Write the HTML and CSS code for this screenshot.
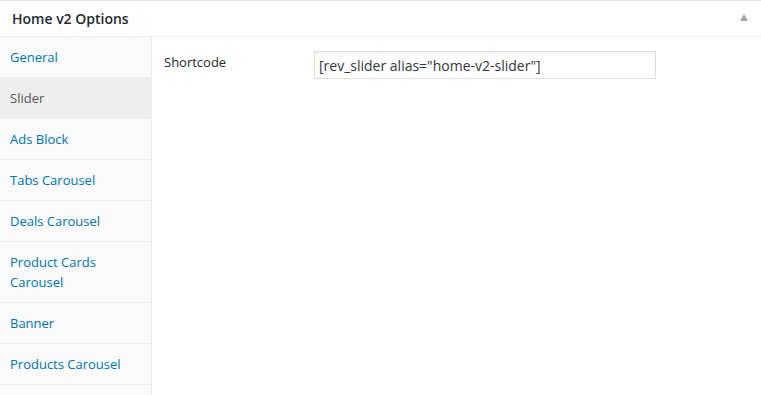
FILE: index.html
```html
<!DOCTYPE html>
<html lang="en">
  <head>
    <meta charset="UTF-8">
    <title>Home v2 Options</title>
    <link rel="stylesheet" href="styles.css">
  </head>
  <body>
    <div class="postbox">
      <div class="postbox-head">
        <h2>Home v2 Options</h2>
        <span class="toggle"></span>
      </div>
      <div class="postbox-body">
        <ul class="tabs">
          <li><a href="#">General</a></li>
          <li class="active"><a href="#">Slider</a></li>
          <li><a href="#">Ads Block</a></li>
          <li><a href="#">Tabs Carousel</a></li>
          <li><a href="#">Deals Carousel</a></li>
          <li><a href="#">Product Cards<br>Carousel</a></li>
          <li><a href="#">Banner</a></li>
          <li><a href="#">Products Carousel</a></li>
        </ul>
        <div class="panel">
          <div class="field">
            <label for="shortcode">Shortcode</label>
            <input id="shortcode" type="text" value='[rev_slider alias="home-v2-slider"]'>
          </div>
        </div>
      </div>
    </div>
  </body>
</html>
```

FILE: styles.css
```css
:root {
  --font: "Open Sans", "Liberation Sans", sans-serif;
  --color-link: #0073aa;
  --color-txt: #23282d;
  --color-line: #eee;
}

body {
  margin: 0;
  background: #fff;
  font-family: var(--font);
  font-size: 13px;
  color: #444;
}

.postbox {
  border-top: 1px solid #e5e5e5;
  height: 394px;
  display: flex;
  flex-direction: column;
}

.postbox-head {
  display: flex;
  align-items: center;
  justify-content: space-between;
  height: 35px;
  border-bottom: 1px solid var(--color-line);
  padding: 0 13px 0 12px;
}

.postbox-head h2 {
  margin: 0;
  font-size: 14px;
  font-weight: 600;
  color: var(--color-txt);
}

.toggle {
  width: 0;
  height: 0;
  border-left: 4px solid transparent;
  border-right: 4px solid transparent;
  border-bottom: 7px solid #a0a5aa;
  margin-top: -2px;
}

.postbox-body {
  flex: 1;
  display: flex;
}

.tabs {
  list-style: none;
  margin: 0;
  padding: 0;
  width: 151px;
  background: #fafafa;
  border-right: 1px solid var(--color-line);
}

.tabs li {
  border-bottom: 1px solid var(--color-line);
}

.tabs a {
  display: block;
  padding: 10px;
  line-height: 20px;
  color: var(--color-link);
  text-decoration: none;
}

.tabs .active {
  background: #eee;
}

.tabs .active a {
  color: #555;
}

.panel {
  flex: 1;
  padding: 14px 12px;
}

.field {
  display: flex;
  align-items: flex-start;
}

.field label {
  width: 150px;
  margin-top: 1px;
  line-height: 20px;
  color: var(--color-txt);
}

.field input {
  box-sizing: border-box;
  width: 342px;
  height: 28px;
  margin: 0;
  padding: 3px 4px;
  border: 1px solid #ddd;
  box-shadow: inset 0 1px 2px rgba(0, 0, 0, .07);
  font-family: var(--font);
  font-size: 14px;
  color: #32373c;
  outline: none;
}
```
